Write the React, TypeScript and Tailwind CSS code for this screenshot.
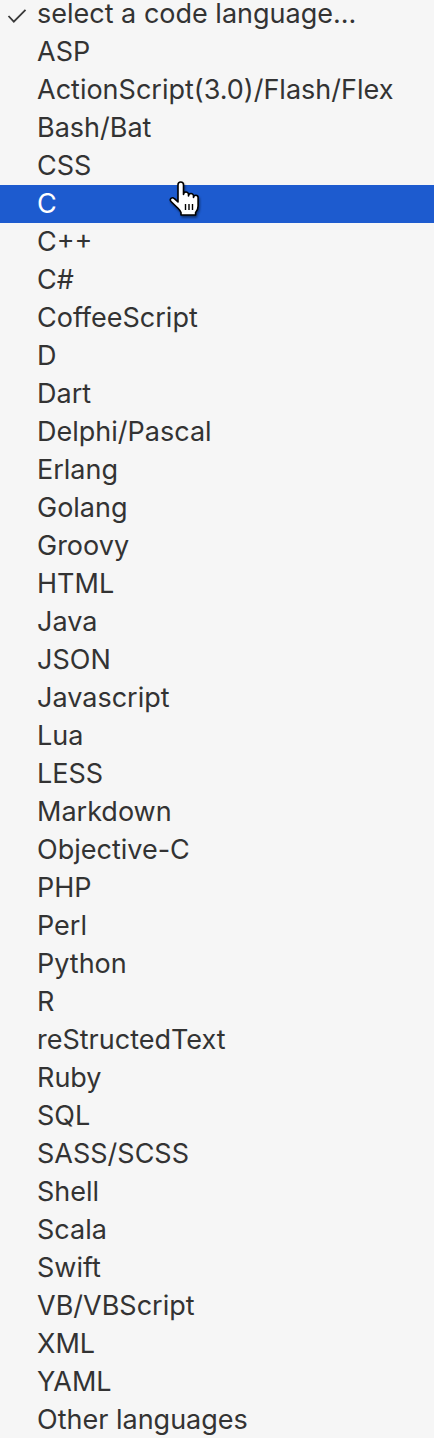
const languages = [
  'ASP',
  'ActionScript(3.0)/Flash/Flex',
  'Bash/Bat',
  'CSS',
  'C',
  'C++',
  'C#',
  'CoffeeScript',
  'D',
  'Dart',
  'Delphi/Pascal',
  'Erlang',
  'Golang',
  'Groovy',
  'HTML',
  'Java',
  'JSON',
  'Javascript',
  'Lua',
  'LESS',
  'Markdown',
  'Objective-C',
  'PHP',
  'Perl',
  'Python',
  'R',
  'reStructedText',
  'Ruby',
  'SQL',
  'SASS/SCSS',
  'Shell',
  'Scala',
  'Swift',
  'VB/VBScript',
  'XML',
  'YAML',
  'Other languages',
]

function HandCursor() {
  return (
    <svg
      width="45"
      height="45"
      viewBox="0 0 45 45"
      className="absolute left-[165px] top-[178px] drop-shadow-[1px_2px_1px_rgba(0,0,0,0.45)]"
    >
      <path
        d="M13 6.75 a2.75 2.75 0 0 1 5.5 0 V16.5 a2.5 2.5 0 0 1 5 0 V18 a2.5 2.5 0 0 1 5 0 V19.5 a2.3 2.3 0 0 1 4.6 0 V28 c0 3 -1 5 -2.5 6.5 V37 H16 V34.5 c-0.6 -1.5 -1.6 -2.8 -3 -4.2 L6 23.5 c-1 -1 -1 -2.4 0 -3.2 c1 -0.8 2.4 -0.6 3.4 0.4 L13 24 Z"
        fill="white"
        stroke="black"
        strokeWidth="1.6"
        strokeLinejoin="round"
      />
      <path d="M20.5 26 V32 M24 26 V32 M27.5 26 V32" stroke="black" strokeWidth="1.4" />
    </svg>
  )
}

export default function App() {
  return (
    <div className="relative w-[434px] h-[1438px] overflow-hidden bg-[#f6f6f6] font-['Inter',sans-serif] text-[27px] leading-[32px] text-[#333]">
      <ul>
        {/* Current selection, its top is cut by the window edge */}
        <li className="flex h-[33px] items-center pb-[5px] leading-[28px]">
          <span className="flex w-[37px] justify-center">
            <svg width="20" height="14" viewBox="0 0 20 14" fill="none" className="mt-[4px] ml-[-4px]">
              <path d="M1.5 7 L6.8 12.6 L18.5 0.8" stroke="#3a3a3a" strokeWidth="1.8" />
            </svg>
          </span>
          <span>select a code language...</span>
        </li>

        {languages.map((lang) => (
          <li
            key={lang}
            className={`flex h-[38px] items-center pl-[37px] ${lang === 'C' ? 'bg-[#1d5bcf] text-white' : ''}`}
          >
            {lang}
          </li>
        ))}
      </ul>

      <HandCursor />
    </div>
  )
}
